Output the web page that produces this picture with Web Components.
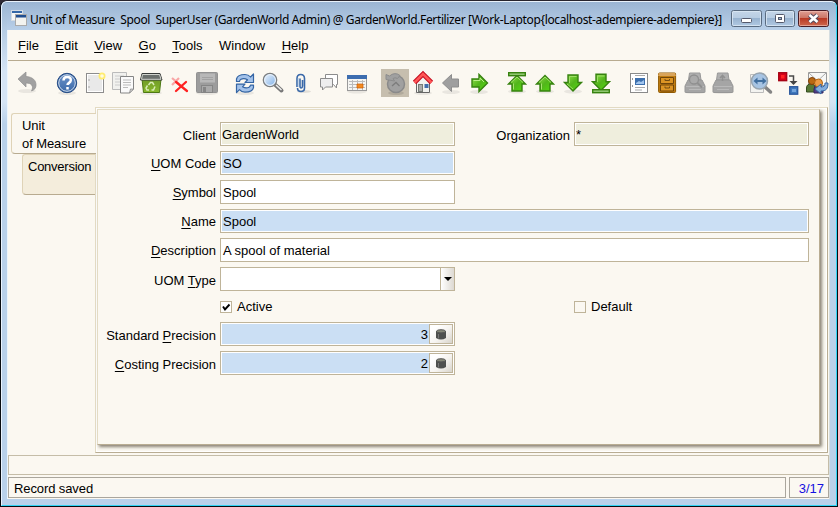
<!DOCTYPE html>
<html lang="en"><head><meta charset="utf-8"><title>Unit of Measure</title>
<style>
html,body{margin:0;width:838px;height:507px;overflow:hidden;background:#302b35}
body{font:13px "Liberation Sans",Arial,sans-serif;color:#000}
</style></head><body>
<app-window>
  <title-bar slot="title">Unit of Measure&nbsp; Spool&nbsp; SuperUser (GardenWorld Admin) @ GardenWorld.Fertilizer [Work-Laptop{localhost-adempiere-adempiere}]</title-bar>
  <menu-bar></menu-bar>
  <tool-bar></tool-bar>
  <tab-area>
    <side-tab slot="tabs" active>Unit<br>of Measure</side-tab>
    <side-tab slot="tabs">Conversion</side-tab>
    <record-form></record-form>
  </tab-area>
  <status-line></status-line>
</app-window>
<script>
const define=(name,html,setup)=>{
  const t=document.createElement('template');t.innerHTML='<style>*{box-sizing:border-box}u{text-decoration:underline;text-underline-offset:2px;text-decoration-thickness:1px;text-decoration-skip-ink:none}</style>'+html;
  customElements.define(name,class extends HTMLElement{
    constructor(){super();this.attachShadow({mode:'open'}).append(t.content.cloneNode(true));}
    connectedCallback(){if(setup)setup(this,this.shadowRoot);}
  });
};

define('app-window',`<style>
:host{display:block;box-sizing:border-box;width:838px;height:507px;border:1px solid #080b10;border-top-color:#27242d;border-radius:7px 7px 0 0;overflow:hidden;background:#b9d1ea}
.frame{width:836px;height:505px;border:1px solid #30d4f4;border-left-color:#eaf4ff;border-top-color:#e8f1fa;border-radius:6px 6px 0 0;padding:0 6px 6px 5px;background:linear-gradient(#9cb7d4,#b5cce4 28px,#d5e4f4 70px,#d5e4f4 100px,#b9d1ea 122px)}
.body{display:flex;flex-direction:column;height:469px;width:823px;border-left:1px solid #edf5fc;background:#fbf8f1;border-right:1px solid #d5dde0}
</style><div class="frame"><slot name="title"></slot><div class="body"><slot></slot></div></div>`);

define('title-bar',`<style>
:host{display:flex;height:28px;width:823px;align-items:flex-start;background:linear-gradient(#9bb5d3,#b8cfe8);white-space:nowrap}
.ic{flex:none;margin:8px 0 0 4px}
.t{font:12px "Noto Sans","Open Sans",sans-serif;letter-spacing:-.365px;margin:8px 0 0 3px;line-height:19px;width:700px}
.b{display:flex;gap:3px;margin-top:8px;margin-left:auto;padding-right:1px}
.b svg{display:block}
</style>
<svg class="ic" width="16" height="16"><rect x=".5" y=".5" width="11" height="10" fill="#f6f7f7" stroke="#d4dce4"/><path d="M1 1h10v2H1z" fill="#3568a8"/><rect x="4.5" y="4.5" width="11" height="11" fill="#f3f3ef" stroke="#aaa"/><path d="M5 5h10v2.500H5z" fill="#214f91"/></svg>
<div class="t"><slot></slot></div>
<div class="b">
<svg width="31" height="17"><defs><linearGradient id="g" x2="0" y2="1"><stop stop-color="#c5d6e8"/><stop offset=".48" stop-color="#b7cce2"/><stop offset=".5" stop-color="#98b3d0"/><stop offset="1" stop-color="#b2cae3"/></linearGradient></defs><rect x=".5" y=".5" width="30" height="16" rx="2" fill="url(#g)" stroke="#596b80"/><rect x="1.500" y="1.500" width="28" height="14" rx="1" fill="none" stroke="#dce9f5" opacity=".8"/><rect x="10.500" y="8.500" width="10" height="4" rx="1" fill="#fff" stroke="#54596b"/></svg>
<svg width="30" height="17"><rect x=".5" y=".5" width="29" height="16" rx="2" fill="url(#g)" stroke="#596b80"/><rect x="1.500" y="1.500" width="27" height="14" rx="1" fill="none" stroke="#dce9f5" opacity=".8"/><rect x="10.500" y="4.500" width="9" height="8" rx="1" fill="#fff" stroke="#54596b"/><rect x="13.500" y="7.500" width="3" height="2" fill="#9db8d6" stroke="#54596b"/></svg>
<svg width="31" height="17"><defs><linearGradient id="r" x2="0" y2="1"><stop stop-color="#e0a197"/><stop offset=".46" stop-color="#cc7565"/><stop offset=".5" stop-color="#b93a25"/><stop offset="1" stop-color="#d06b50"/></linearGradient></defs><rect x=".5" y=".5" width="30" height="16" rx="2" fill="url(#r)" stroke="#471c25"/><rect x="1.500" y="1.500" width="28" height="14" rx="1" fill="none" stroke="#eebcb0" opacity=".7"/><path d="m11.500 5 8 7m0-7-8 7" stroke="#524b5e" stroke-width="4.600"/><path d="m11.500 5 8 7m0-7-8 7" stroke="#fff" stroke-width="2.600"/></svg>
</div>`);

define('menu-bar',`<style>:host{display:flex;box-sizing:border-box;height:31px;flex:none;padding:8px 0 0 10px;gap:16.4px;border-bottom:1px solid #b8ab90;line-height:16px;font-size:13px}</style>
<span><u>F</u>ile</span><span><u>E</u>dit</span><span><u>V</u>iew</span><span><u>G</u>o</span><span><u>T</u>ools</span><span>Window</span><span><u>H</u>elp</span>`);

const sh=(y=22.5,rx=9)=>`<ellipse cx="14" cy="${y}" rx="${rx}" ry="2" fill="#000" opacity=".07"/>`;
const up='M14 6.500 22.500 15H19v7H9v-7H5.500z', dn='M14 22 22.500 13.500H19V6H9v7.500H5.500z';
const green='fill="url(#gr)" stroke="#378210" stroke-width="1.400"';
const printer=x=>sh(23,11)+`<path d="M8.500 4h10.500l1 7H7.500z" fill="#b0b0b0" stroke="#999"/><path d="M7 11h14l3 6v5.500q0 1-1 1H5q-1 0-1-1V17z" fill="#a5a5a5" stroke="#979797"/><path d="M5 17.500h18M8 20.500h12" stroke="#b9b9b9"/>${x}`;
const icons={
undo:sh(22)+'<path d="M5 10 13 3v4.500c7 .5 10 4 10 8.500 0 3-1.500 5-4.500 6 2.500-5 0-8-5.500-8v4z" fill="#a1a1a1" stroke="#8f8f8f" stroke-width=".7"/>',
help:sh(24)+'<circle cx="14" cy="14" r="9.700" fill="#345f9e" stroke="#244b85"/><circle cx="14" cy="14" r="8.300" fill="url(#bl)" stroke="#d0ddec"/><path d="M10.500 11.500q0-3.500 3.700-3.500t3.600 3.200c0 2.700-3.300 2.600-3.300 4.900m0 1.800v2.500" fill="none" stroke="#fff" stroke-width="2.500"/>',
add:'<rect x="5.500" y="4.500" width="17" height="19" fill="#fff" stroke="#8d8d8d"/><rect x="7" y="6" width="14" height="16" fill="#e9e9e9"/><path d="M8 10v2m0 5v2" stroke="#aaa"/><circle cx="21" cy="7" r="3.500" fill="#ffec70"/><circle cx="21" cy="7" r="1.800" fill="#fffbe0"/>',
copy:'<path d="M3.500 3.500h14v17h-14z" fill="#f1f1ee" stroke="#bbb"/><path d="M6 7h9M6 10h6M6 13h5M6 16h5" stroke="#ccc"/><path d="M11.500 7.500h13V20l-4 4h-9z" fill="#fafafa" stroke="#858585"/><path d="M14 11h8M14 13.500h8M14 16h8M14 18.500h5" stroke="#bbb"/><path d="m20.500 24 1-4 3 .2z" fill="#ddd" stroke="#888" stroke-width=".8"/>',
trash:sh(24,11)+'<path d="M5 10h19l-1.500 13.500h-16z" fill="url(#tr)" stroke="#4d7815"/><path d="M5 4.500h18l2 6.500H3.500z" fill="#6b706d" stroke="#373a38"/><path d="M5.500 5.500 4.500 10.300h19.500l-1.500-4.800z" fill="none" stroke="#d0d3cd"/><path d="m11.500 16 2-2.500h2l1.500 2.500m1 1.500-1.500 3.500h-2m-2.500 0h-2l-1-2 1.500-2.500" fill="none" stroke="#d9ecb6" stroke-width="1.500"/>',
delsel:'<path d="m7 9 7 6m0-6-7 7" stroke="#f8a6a6" stroke-width="2.200"/><path d="m11 13 11 9m-1-9-10 9" stroke="#f22" stroke-width="2.300" stroke-linecap="round"/>',
save:sh(24,11)+'<rect x="3.500" y="3.500" width="21" height="20" rx="1" fill="#9c9c9c" stroke="#929292"/><rect x="7" y="4.500" width="15" height="9" fill="#b8b8b8"/><path d="M9 8.500h11M9 10.500h11" stroke="#a2a2a2"/><rect x="8.500" y="16.500" width="11" height="7" fill="#aaa" stroke="#858585"/><path d="M10 18h3v5h-3z" fill="#858585"/>',
refresh:sh(24)+'<g fill="#a3c2ea" stroke="#3465a4" stroke-width="1.200" stroke-linejoin="round"><path d="M5.500 12.500V10q1-4.500 8.500-4.500 3.500 0 5.500 2.500L22.500 5v8.500h-8.500l2.500-2.700q-3.500-2-6.500-.5-1.500 1-1.500 2.200z"/><path d="M5.500 12.500V10q1-4.500 8.500-4.500 3.500 0 5.500 2.500L22.500 5v8.500h-8.500l2.500-2.700q-3.500-2-6.500-.5-1.500 1-1.500 2.200z" transform="rotate(180 14 14.300)"/></g>',
find:'<path d="m16.500 16 6 5.500" stroke="#777" stroke-width="4" stroke-linecap="round"/><path d="m17 16 5.500 5" stroke="#eee" stroke-width="1.500"/><circle cx="11" cy="11" r="6.700" fill="#a9c9ed" stroke="#7d7f80" stroke-width="1.300"/><circle cx="11" cy="11" r="5.400" fill="url(#lens)" stroke="#eef4fa"/>',
attach:'<ellipse cx="17" cy="22.500" rx="7" ry="1.500" opacity=".1"/><path d="M10 18V9.500q0-4 3.700-4t3.800 4V19q0 3.500-3.500 3.500T10.500 19M13 9.500V17q0 2 1.200 2t1.300-2V11" fill="none" stroke="#3a69a9" stroke-width="1.600"/><path d="M11.300 9v9" stroke="#a6c4e8" stroke-width=".8"/>',
chat:'<path d="M10.500 5.500h12v10h-1V19l-3-3.500h-8z" fill="#fff" stroke="#8c8c8c"/><path d="M5.500 9.500h12v8.500h-7L7.500 21v-3h-2z" fill="#eee" stroke="#8c8c8c"/>',
grid:sh(22.500,10)+'<rect x="4.500" y="6.500" width="19" height="15" fill="#f5f5f2" stroke="#999"/><path d="M4 6h20v4H4z" fill="#3d6daf"/><path d="M6 12.500h16M6 15.500h16M6 18.500h16M9.500 11v10M14.500 11v10M19.500 11v10" stroke="#bbb"/><path d="M14 15h6v4h-6z" fill="#f28a20" stroke="#ce5c00" stroke-width=".7"/>',
history:'<path d="M0 0h28v28H0z" fill="#c6beae"/><ellipse cx="15" cy="24" rx="8" ry="2" opacity=".1"/><circle cx="15" cy="15" r="8.500" fill="#a0a0a0" stroke="#8a8a8a" stroke-width="1.500"/><path d="m11 17 4-3.500 3.500 3.500" fill="none" stroke="#7c7c7c" stroke-width="1.300"/><path d="m5 5.500 3.500 1.500q5.500-4.500 10.500-.5l-2.500 3q-2.500-1.500-4.500 0l1.500 2.500-8.500-1.500z" fill="#a0a0a0" stroke="#8c8c8c"/>',
home:sh(24)+'<path d="M7.500 13 14 7l6.500 6v10.500h-13z" fill="#f2f2ef" stroke="#666"/><path d="M9 15h5v8H9z" fill="#767b75"/><path d="M10 16h3v6h-3z" fill="#aaa"/><path d="M15.500 15h4v4h-4z" fill="#426eac"/><path d="m5.500 13.500 8.500-8.500 8.500 8.500" fill="none" stroke="#c40e20" stroke-width="4.600"/><path d="m5.500 13.500 8.500-8.500 8.500 8.500" fill="none" stroke="#f55" stroke-width="2.600"/>',
back:sh(23)+'<path d="m5.500 14 9-8.500V10h7v8h-7v4.500z" fill="#9f9f9f" stroke="#8e8e8e"/>',
next:sh(23)+`<path d="m22.500 14-8.500-8.500V10H7v8h7v4.500z" ${green}/><path d="M8.500 11.500H15V9l4 4" fill="none" stroke="#b8ee87"/>`,
first:sh()+`<path d="${up}" ${green}/><path d="m8 13.500 6-5.500 6 5.500m-9.500 1v6" fill="none" stroke="#a5e36e"/><rect x="5.700" y="3.700" width="16.600" height="3" fill="#8fc770" stroke="#378210" stroke-width="1.400"/>`,
up:sh()+`<path d="${up}" ${green}/><path d="m8 13.500 6-5.500 6 5.500m-9.500 1v6" fill="none" stroke="#a5e36e"/>`,
down:sh()+`<path d="${dn}" ${green}/><path d="M10.500 14V7.500h7M8 15l6 5" fill="none" stroke="#9ede66"/>`,
last:`<path d="${dn}" transform="translate(0 -.8)" ${green}/><path d="M10.500 13V7h7" fill="none" stroke="#9ede66"/><rect x="5.700" y="20.700" width="16.600" height="3" fill="#8fc770" stroke="#378210" stroke-width="1.400"/>`,
report:'<rect x="5.500" y="4.500" width="17" height="19" fill="#fff" stroke="#8a8a8a"/><rect x="10" y="9" width="10" height="7" fill="#3d70ae"/><path d="m11 14 3-2 2 1 3-2v4h-8z" fill="#a2c5ee"/><path d="M10 6.500h10M10 18.500h10M10 21h7" stroke="#aaa"/><path d="M7.500 9v2m0 5v2" stroke="#999"/>',
archive:'<rect x="5.600" y="4" width="17" height="19.500" rx="1" fill="#c17d11" stroke="#8f5902"/><path d="M6 4h16l1 3H5z" fill="#d9a45a"/><path d="M7.500 8.500h13v6h-13zm0 7.500h13v6h-13z" fill="#dc9424" stroke="#70450a"/><path d="M12 10v1.500h4.500V10m-4.500 7.500V19h4.500v-1.500" fill="none" stroke="#754c12"/>',
preview:printer('<circle cx="13" cy="10.500" r="4.500" fill="#aaa" stroke="#909090" stroke-width="1.300"/><path d="m16 13.500 5 5" stroke="#909090" stroke-width="2"/>'),
print:printer('<path d="M13.500 12V7m-2.500 2 2.500-2.500L16 9" fill="none" stroke="#909090" stroke-width="1.600"/>'),
zoom:'<path d="M3.500 5.500h13v18h-13z" fill="#f3f3f0" stroke="#bbb"/><path d="m18 18 5.500 5" stroke="#858585" stroke-width="3.500" stroke-linecap="round"/><circle cx="12.500" cy="12" r="8" fill="#a7c4e3" stroke="#98a5b0" stroke-width="1.500"/><path d="m6.500 12 4-3.500V11h5V8.500l4 3.500-4 3.500V13h-5v2.500z" fill="#406f9f"/>',
flow:'<rect x="3.700" y="3.700" width="8" height="8" fill="#d40018" stroke="#a40012" stroke-width="1.300"/><rect x="6" y="6" width="3.500" height="3.500" fill="#f22"/><path d="M14 7h4.500v6" fill="none" stroke="#4a4a4a" stroke-width="1.500"/><path d="M14.500 12h8l-4 4z" fill="#444"/><rect x="14.700" y="17.700" width="8" height="7.500" fill="#3f79bd" stroke="#2a589d" stroke-width="1.300"/><path d="M17 20h4v3h-4z" fill="#73a4dc"/>',
request:'<path d="M5.500 3.500h18v13h-18z" fill="#f7f7f5" stroke="#999"/><path d="m6 4 8.500 8L23 4" fill="none" stroke="#aaa"/><path d="M3.500 23v-4q0-4 4.500-4t5 4v4z" fill="#577936" stroke="#354c22"/><path d="M11 24v-4q0-4 4-4t5 4v4z" fill="#503f84" stroke="#382860"/><circle cx="9" cy="12" r="3.500" fill="#b96913" stroke="#804008"/><circle cx="15.500" cy="14" r="4" fill="#ec9b46" stroke="#b36410"/><path d="m12 20 6-5v3c3 0 4-1 4-4h3c0 6-2 8-7 8v3z" fill="#83addd" stroke="#3465a4"/>'
};
const defs='<defs><linearGradient id="gr" x2="1" y2="1"><stop offset=".15" stop-color="#84d742"/><stop offset=".5" stop-color="#52b51b"/><stop offset=".8" stop-color="#52cd12"/></linearGradient><linearGradient id="bl" x2="0" y2="1"><stop stop-color="#6990c7"/><stop offset="1" stop-color="#3e6cab"/></linearGradient><linearGradient id="tr" x2="0" y2="1"><stop stop-color="#6f9a26"/><stop offset="1" stop-color="#89b92d"/></linearGradient><linearGradient id="lens" x2="1" y2="1"><stop stop-color="#e6f0fb"/><stop offset="1" stop-color="#85b4e8"/></linearGradient></defs>';
define('tool-icon',`<style>:host{display:block;flex:none;width:28px;height:28px}svg{display:block}</style>`,(h,r)=>{
  if(!r.querySelector('svg')) r.innerHTML+=`<svg width="28" height="28" viewBox="0 0 28 28">${defs}${icons[h.getAttribute('name')]}</svg>`;
});
const groups=['undo','help add copy trash delsel save','refresh find attach chat grid','history home back next','first up down last','report archive preview print','zoom flow request'];
define('tool-bar',`<style>:host{display:flex;height:38px;flex:none;gap:10px;padding:8px 0 0 5px}div{display:flex}div:first-of-type{margin-right:2px}</style>`+groups.map(g=>`<div>${g.split(' ').map(n=>`<tool-icon name="${n}"></tool-icon>`).join('')}</div>`).join(''));

define('tab-area',`<style>
:host{display:flex;height:346px;flex:none;position:relative}
.tabs{width:87px;flex:none;display:flex;flex-direction:column;align-items:flex-end;padding-top:6px}
.outer{width:733px;height:346px;box-sizing:border-box;border:1px solid #e3dbc4;border-right-color:#b9ad93;border-bottom-color:#b9ad93;padding:1px;background:#fff;flex:none}
.in{background:#fbf8f1;height:342px}
</style><div class="tabs"><slot name="tabs"></slot></div><div class="outer"><div class="in"><slot></slot></div></div>`);
define('side-tab',`<style>
:host{display:block;box-sizing:border-box;width:73px;height:41px;background:#f4eddc;border:1px solid #dfd3b7;border-bottom-color:#b8ab90;border-right:0;border-radius:3px 0 0 4px;padding:4px 0 0 5px;line-height:16px;white-space:nowrap;letter-spacing:-.25px}
:host([active]){width:85px;margin-right:-1px;position:relative;background:#fbf8f1;padding:3px 0 0 10px;line-height:18px;letter-spacing:-.1px}
</style><slot></slot>`);

define('text-field',`<style>
:host{display:flex;box-sizing:border-box;height:24px;min-width:0;border:1px solid #bfb499;background:#fff;padding:1px}
.v{flex:1;padding:0 0 0 1px;line-height:22px;background:#fff;white-space:pre}
:host([kind=ro]) .v{background:#efeedd}:host([kind=ro]) .v{padding-left:0}
:host([kind=req]) .v{background:#cbdff4}
:host([button]) .v{text-align:right;padding-right:1px}
.b{display:none;flex:none}
:host([button]) .b{display:flex;width:24px;height:20px;border:1px solid #bfb499;align-items:center;justify-content:center;background:linear-gradient(135deg,#fff 20%,#f6f4f0 55%,#d8d4cb)}
:host([combo]){padding:0}
:host([combo]) .b{display:flex;width:14px;height:22px;border-left:1px solid #bfb499;background:linear-gradient(90deg,#fff,#ddd9d2);align-items:center;justify-content:center}
.calc,.arr{display:none}:host([button]) .calc,:host([combo]) .arr{display:block}
</style><div class="v"><slot></slot></div><div class="b">
<svg class="calc" width="10" height="11"><path d="M0 2v7q5 3 10 0V2z" fill="#4e504e"/><ellipse cx="5" cy="2.300" rx="4.500" ry="1.600" fill="#858878" stroke="#555"/><path d="M2.500 5v4.500" stroke="#777" /></svg>
<svg class="arr" width="8" height="4"><path d="M0 0h8L4 4z"/></svg></div>`);
define('check-item',`<style>:host{display:flex;gap:4px;align-items:center;line-height:16px;padding-top:1px}svg{display:block;flex:none}path{display:none}:host([on]) path{display:block}:host([on]) rect{fill:#fff}</style>
<svg width="13" height="12"><rect x=".5" y=".5" width="11" height="11" fill="#fbf8f1" stroke="#bfb499"/><path d="m3 5.500 2 3 4.500-5" fill="none" stroke="#000" stroke-width="1.900"/></svg><slot></slot>`);
define('record-form',`<style>
:host{display:grid;box-sizing:border-box;width:723px;height:336px;border:1px solid #e3dbc4;border-right-color:#b9ad93;border-bottom-color:#b9ad93;box-shadow:2px 2px 3px #8a8375;padding:12px 0 0 0;background:#fbf8f1;grid-template-columns:118px 235px 111px 235px;column-gap:4px;row-gap:5px;grid-template-rows:repeat(6,24px) 21px 24px 24px;align-content:start}
label{text-align:right;white-space:nowrap;line-height:16px;padding-top:6px}
.up{padding-top:5px}
.wide{grid-column:2/5}.c1{grid-column:1}.c2{grid-column:2}.c4{grid-column:4}
</style>
<label>Client</label><text-field kind="ro">GardenWorld</text-field><label>Organization</label><text-field kind="ro">*</text-field>
<label class="c1 up"><u>U</u>OM Code</label><text-field kind="req">SO</text-field>
<label class="c1 up"><u>S</u>ymbol</label><text-field>Spool</text-field>
<label class="c1 up"><u>N</u>ame</label><text-field kind="req" class="wide">Spool</text-field>
<label class="c1 up"><u>D</u>escription</label><text-field class="wide">A spool of material</text-field>
<label class="c1">UOM <u>T</u>ype</label><text-field combo></text-field>
<check-item on class="c2">Active</check-item><check-item class="c4">Default</check-item>
<label class="c1">Standard <u>P</u>recision</label><text-field kind="req" button>3</text-field>
<label class="c1"><u>C</u>osting Precision</label><text-field kind="req" button>2</text-field>`);
define('status-line',`<style>
:host{display:flex;flex-direction:column;gap:2px;padding-top:2px}
.a{height:20px;border:1px solid #c5bda8}
.r{display:flex;gap:3px}.r div{height:21px;border:1px solid #aaa69d;line-height:21px;padding:0 4px 0 5px;letter-spacing:-.1px}
.m{flex:1}.r .n{width:40px;color:#1410e0;text-align:right;letter-spacing:0}
</style><div class="a"></div><div class="r"><div class="m">Record saved</div><div class="n">3/17</div></div>`);
</script></body></html>
